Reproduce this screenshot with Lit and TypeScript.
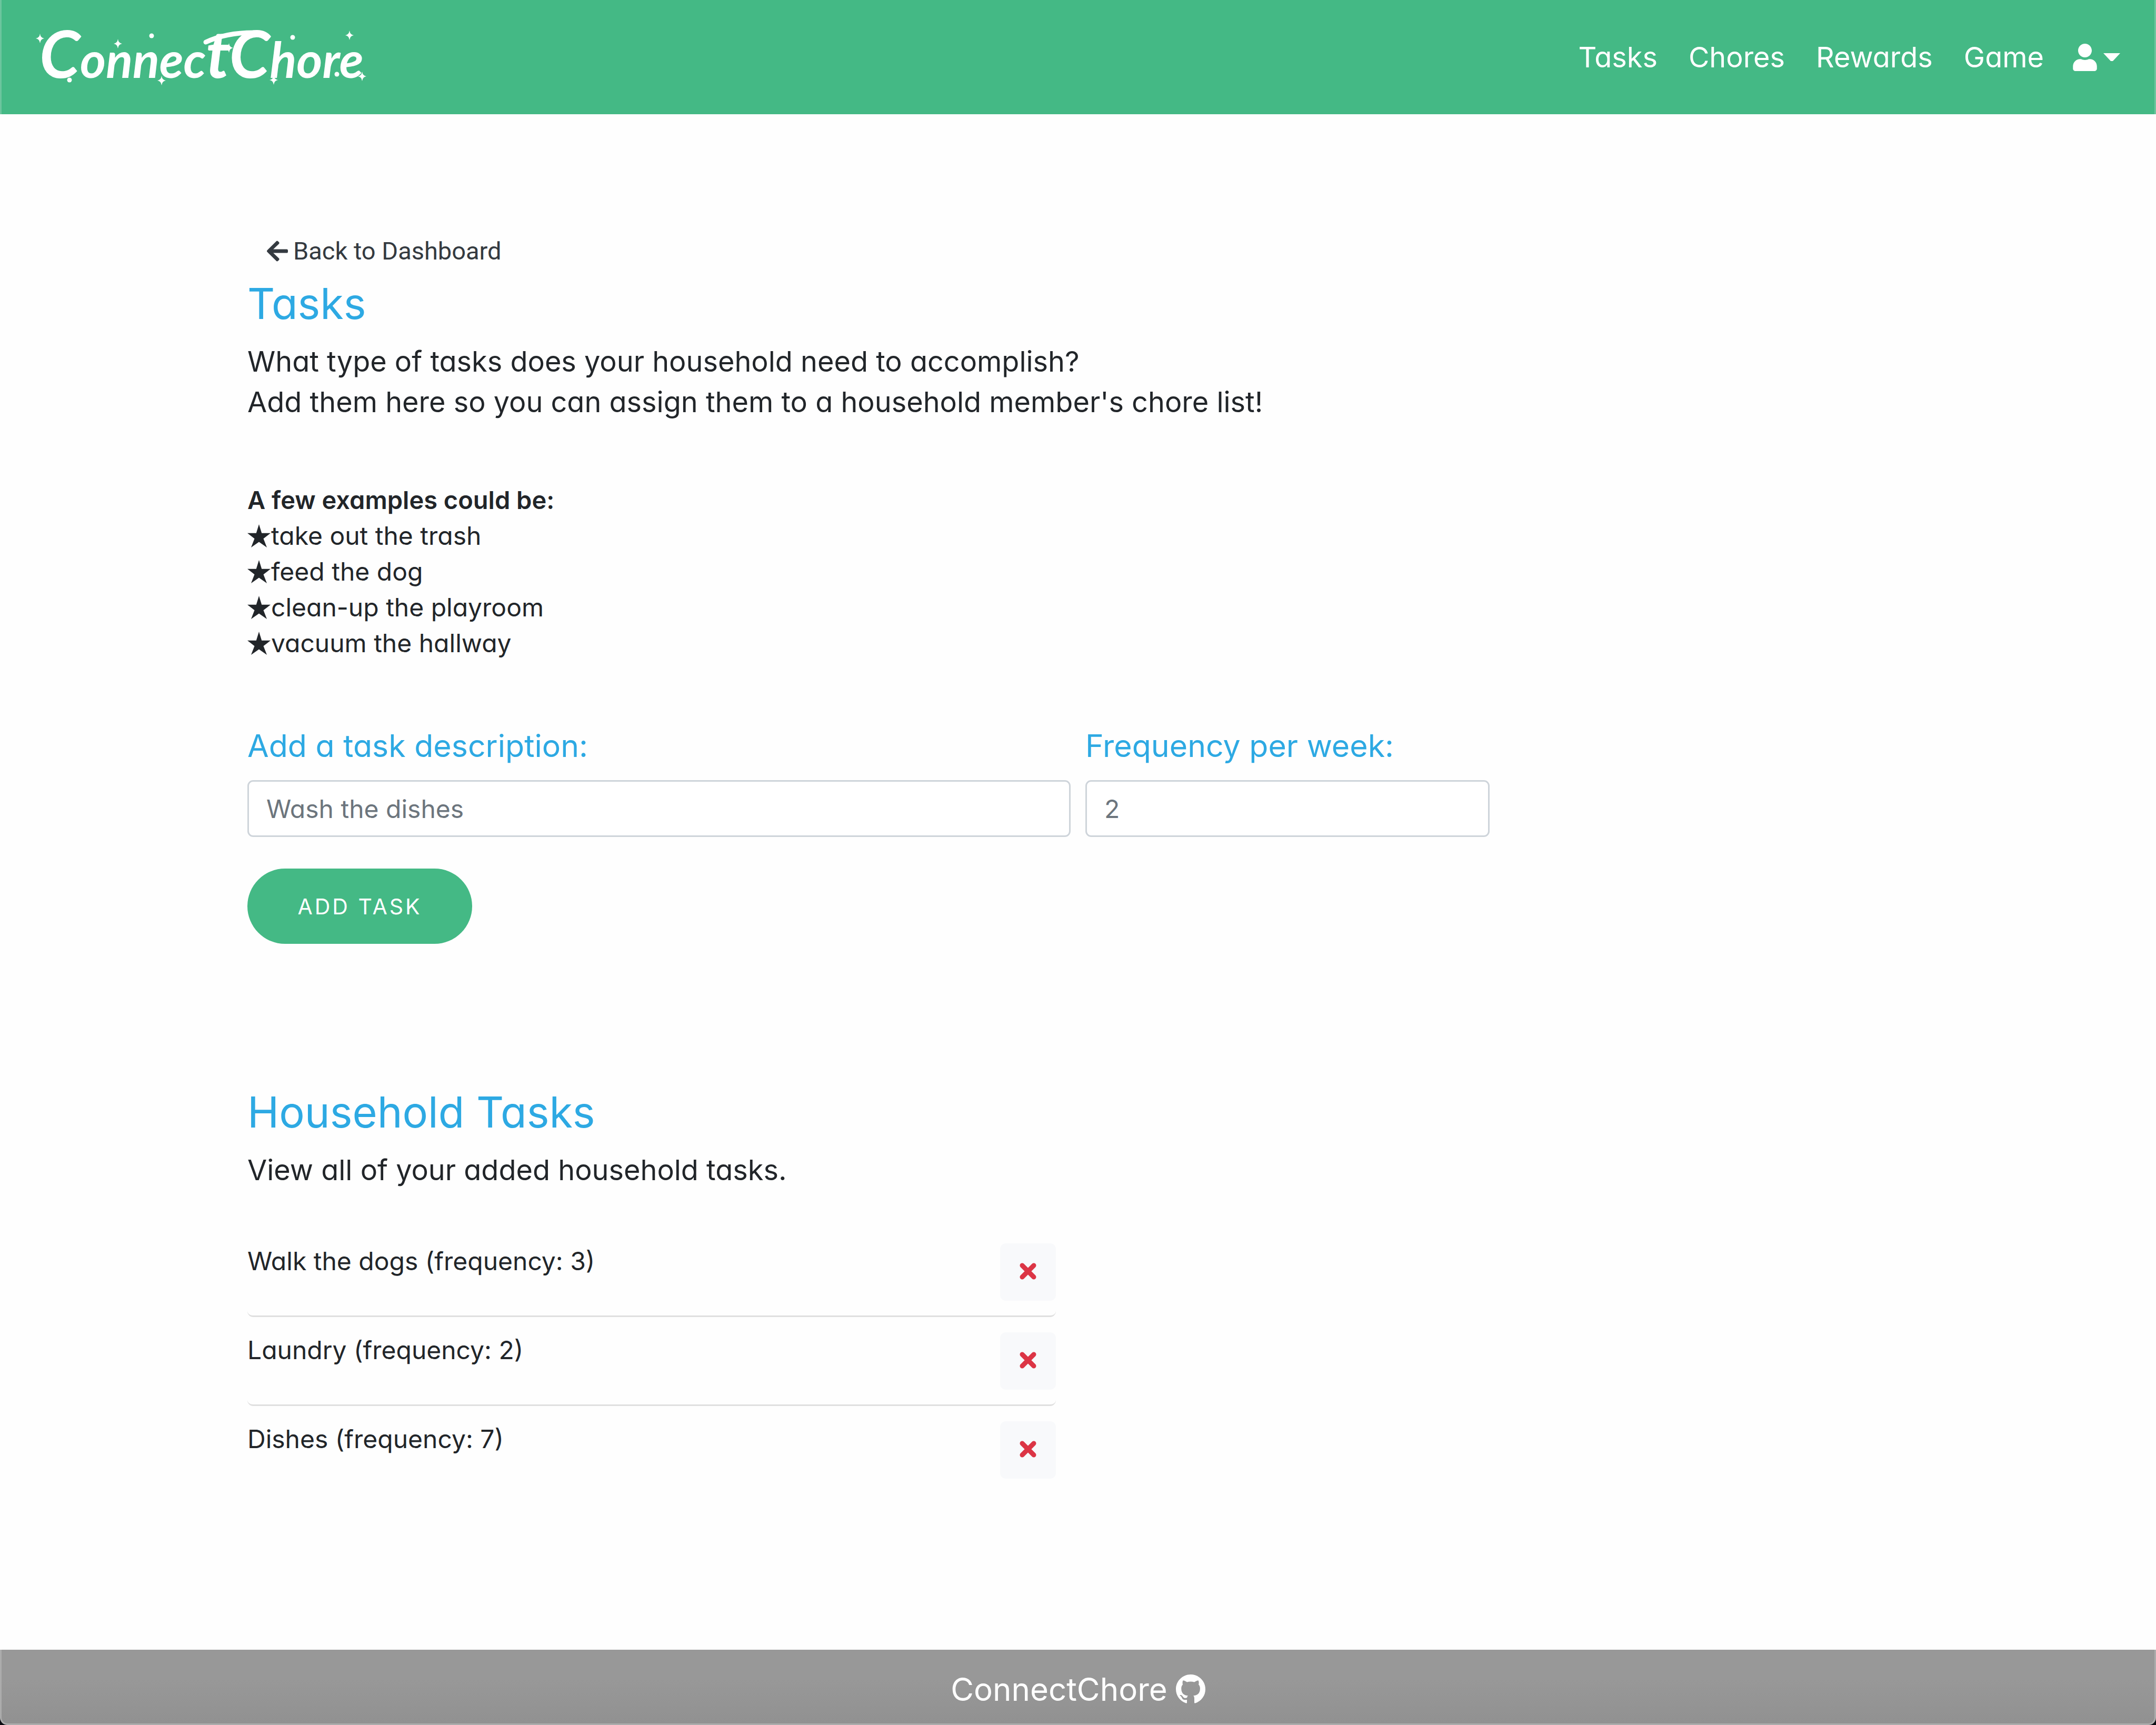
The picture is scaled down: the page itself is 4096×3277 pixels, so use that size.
import { LitElement, html, css, svg } from "lit";
import { customElement } from "lit/decorators.js";

const sparkles = [[35, 46], [183, 56], [394, 64], [266, 126], [479, 125], [623, 40], [647, 118]];
const dots = [[247, 41], [91, 125], [515, 44], [599, 114]];

@customElement("app-root")
export class AppRoot extends LitElement {
  static styles = css`
    :host {
      display: flex;
      flex-direction: column;
      min-height: 100vh;
      background: #fefefe;
      color: #212529;
      font-family: Inter, "Open Sans", sans-serif;
      font-feature-settings: "cv11";
      font-size: 48px;
      line-height: 68px;
    }
    *, *::before, *::after { box-sizing: border-box; }
    h1, h2, p, ul { margin: 0; padding: 0; font-weight: 400; }
    ul { list-style: none; }
    a { color: inherit; text-decoration: none; }
    button, input { font: inherit; font-feature-settings: inherit; }
    svg { display: block; fill: currentColor; flex: none; }

    .navbar {
      display: flex;
      align-items: center;
      justify-content: space-between;
      height: 217px;
      padding: 0 65px 0 38px;
      border: 3px solid #6cc59e;
      border-width: 0 3px;
      background: #44b985;
      color: #fff;
    }
    .logo { width: 683px; height: 164px; overflow: visible; }
    .logo-text {
      font-family: Lato, sans-serif;
      font-size: 94px;
      font-style: italic;
      font-weight: 700;
    }
    .logo-tall { font-size: 124px; }
    .swash { fill: none; stroke: currentColor; stroke-width: 9; stroke-linecap: round; }
    .menu { display: flex; align-items: center; gap: 59px; font-size: 54px; }
    .user {
      display: flex;
      align-items: center;
      gap: 12px;
      margin-left: -4px;
      padding: 0;
      border: 0;
      background: none;
      color: inherit;
    }
    .user-icon { width: 46px; height: 52px; }
    .caret { width: 32px; height: 16px; }

    .page {
      flex: 1;
      width: 100%;
      max-width: 3156px;
      margin: 0 auto;
      padding-top: 222px;
    }
    .back {
      display: flex;
      width: fit-content;
      align-items: center;
      gap: 10px;
      padding: 4px 37px;
      color: #343a40;
      font-family: Roboto, sans-serif;
      font-size: 47px;
    }
    .back-icon { width: 40px; height: 40px; }
    .title { margin-top: 14px; color: #2da9e3; font-size: 81px; line-height: 96px; }
    .lead { margin-top: 23px; font-size: 54px; line-height: 77px; }
    .examples { margin-top: 114px; }
    .examples-title { font-size: 47px; font-weight: 600; }
    .example { display: flex; align-items: center; gap: 1px; }
    .star { width: 44px; height: 44px; }

    .form {
      display: grid;
      grid-template-columns: repeat(4, 1fr);
      gap: 24px 28px;
      margin-top: 118px;
    }
    .field { display: flex; flex-direction: column; gap: 22px; }
    .wide { grid-column: span 2; }
    .label { color: #2da9e3; font-size: 59px; line-height: 86px; }
    .input {
      width: 100%;
      height: 108px;
      padding: 0 33px;
      border: 3px solid #ced4da;
      border-radius: 11px;
      background: #fff;
      color: #495057;
    }
    .input::placeholder { color: #6c757d; opacity: 1; }
    .add {
      grid-column: 1 / -1;
      width: 427px;
      height: 143px;
      margin-top: 36px;
      border: 0;
      border-radius: 72px;
      background: #44b985;
      color: #fff;
      font-size: 41px;
      letter-spacing: 4px;
    }
    .section { margin-top: 272px; }
    .tasks { width: 1536px; max-width: 100%; margin-top: 72px; }
    .task {
      display: flex;
      align-items: flex-start;
      justify-content: space-between;
      padding: 29px 0 28px;
      border-bottom: 3px solid #dfdfdf;
      border-radius: 11px;
    }
    .task:last-child { border-bottom: 0; }
    .remove {
      display: grid;
      place-items: center;
      width: 106px;
      height: 109px;
      padding: 0 0 4px;
      border: 0;
      border-radius: 11px;
      background: #f8f9fb;
      color: #dc3545;
    }
    .remove-icon { width: 32px; height: 32px; }

    .base { background: linear-gradient(#fefefe 50%, #0b0d12 50%); }
    .footer {
      display: flex;
      align-items: center;
      justify-content: center;
      gap: 16px;
      height: 143px;
      padding-top: 10px;
      border: 3px solid #acacac;
      border-top: 0;
      border-radius: 0 0 14px 14px;
      background: linear-gradient(#989898 40%, #919191);
      color: #fff;
      font-size: 60px;
    }
    .github { width: 56px; height: 56px; }
  `;

  private examples = ["take out the trash", "feed the dog", "clean-up the playroom", "vacuum the hallway"];
  private tasks = [
    { name: "Walk the dogs", frequency: 3 },
    { name: "Laundry", frequency: 2 },
    { name: "Dishes", frequency: 7 },
  ];

  render() {
    return html`
      <header class="navbar">
        <a href="#" aria-label="ConnectChore">
          <svg class="logo" viewBox="0 0 683 164">
            <text class="logo-text" x="34" y="121"><tspan class="logo-tall">C</tspan>onnec<tspan class="logo-tall">tC</tspan>hore</text>
            <path class="swash" d="M350 53Q390 34 446 35" />
            ${sparkles.map(([x, y]) => svg`<path transform="translate(${x} ${y})" d="M0-9Q1-1 8 0Q1 1 0 9Q-1 1-8 0Q-1-1 0-9Z" />`)}
            ${dots.map(([x, y]) => svg`<circle cx=${x} cy=${y} r="4.5" />`)}
          </svg>
        </a>
        <nav class="menu">
          <a href="#">Tasks</a>
          <a href="#">Chores</a>
          <a href="#">Rewards</a>
          <a href="#">Game</a>
          <button class="user" aria-label="Account">
            <svg class="user-icon" viewBox="0 0 448 512"><path d="M224 256c70.700 0 128-57.300 128-128S294.700 0 224 0 96 57.300 96 128s57.300 128 128 128zm89.600 32h-16.700c-22.200 10.200-46.900 16-72.900 16s-50.600-5.800-72.900-16h-16.700C60.200 288 0 348.200 0 422.400V464c0 26.500 21.500 48 48 48h352c26.500 0 48-21.500 48-48v-41.600c0-74.200-60.200-134.400-134.400-134.400z" /></svg>
            <svg class="caret" viewBox="0 0 32 16"><path d="M0 0H32L18 15H14Z" /></svg>
          </button>
        </nav>
      </header>
      <main class="page">
        <a class="back" href="#">
          <svg class="back-icon" viewBox="0 0 448 448"><path transform="translate(0 -32)" d="M257.500 445.100l-22.200 22.200c-9.400 9.400-24.600 9.400-33.900 0L7 273c-9.400-9.400-9.400-24.600 0-33.900L201.400 44.700c9.400-9.400 24.600-9.400 33.900 0l22.200 22.200c9.500 9.500 9.300 25-.4 34.300L136.600 216H424c13.300 0 24 10.700 24 24v32c0 13.300-10.700 24-24 24H136.600l120.500 114.800c9.800 9.300 10 24.800.4 34.300z" /></svg>
          Back to Dashboard
        </a>
        <h1 class="title">Tasks</h1>
        <p class="lead">
          What type of tasks does your household need to accomplish?<br />
          Add them here so you can assign them to a household member's chore list!
        </p>
        <section class="examples">
          <p class="examples-title">A few examples could be:</p>
          <ul>
            ${this.examples.map((text) => html`
              <li class="example">
                <svg class="star" viewBox="0 0 44 44"><path d="M22 0L27.200 16.800H44L30.500 27.200L37 44L22 33.600L7 44L13.500 27.200L0 16.800H16.800Z" /></svg>
                ${text}
              </li>`)}
          </ul>
        </section>
        <form class="form">
          <div class="field wide">
            <label class="label" for="description">Add a task description:</label>
            <input class="input" id="description" type="text" placeholder="Wash the dishes" />
          </div>
          <div class="field">
            <label class="label" for="frequency">Frequency per week:</label>
            <input class="input" id="frequency" type="text" placeholder="2" />
          </div>
          <button class="add" type="button">ADD TASK</button>
        </form>
        <section class="section">
          <h2 class="title">Household Tasks</h2>
          <p class="lead">View all of your added household tasks.</p>
          <ul class="tasks">
            ${this.tasks.map((task) => html`
              <li class="task">
                <span>${task.name} (frequency: ${task.frequency})</span>
                <button class="remove" aria-label="Remove ${task.name}">
                  <svg class="remove-icon" viewBox="0 0 32 32"><path d="M5 5L27 27M27 5L5 27" stroke="currentColor" stroke-width="9" stroke-linecap="round" /></svg>
                </button>
              </li>`)}
          </ul>
        </section>
      </main>
      <div class="base">
        <footer class="footer">
          <span>ConnectChore</span>
          <a href="#" aria-label="GitHub">
            <svg class="github" viewBox="0 0 16 16"><path d="M8 0C3.580 0 0 3.580 0 8c0 3.540 2.290 6.530 5.470 7.590.4.070.55-.17.55-.38 0-.19-.01-.82-.01-1.490-2.010.37-2.530-.49-2.690-.94-.09-.23-.48-.94-.82-1.130-.28-.15-.68-.52-.01-.53.63-.01 1.080.58 1.230.82.72 1.210 1.870.87 2.330.66.07-.52.28-.87.51-1.070-1.780-.2-3.640-.89-3.640-3.950 0-.87.31-1.590.82-2.150-.08-.2-.36-1.020.08-2.120 0 0 .67-.21 2.200.82.64-.18 1.320-.27 2-.27s1.360.09 2 .27c1.530-1.040 2.200-.82 2.200-.82.44 1.100.16 1.920.08 2.120.51.56.82 1.270.82 2.150 0 3.070-1.870 3.750-3.650 3.950.29.25.54.73.54 1.480 0 1.070-.01 1.930-.01 2.200 0 .21.15.46.55.38A8.010 8.010 0 0 0 16 8c0-4.420-3.580-8-8-8z" /></svg>
          </a>
        </footer>
      </div>
    `;
  }
}
